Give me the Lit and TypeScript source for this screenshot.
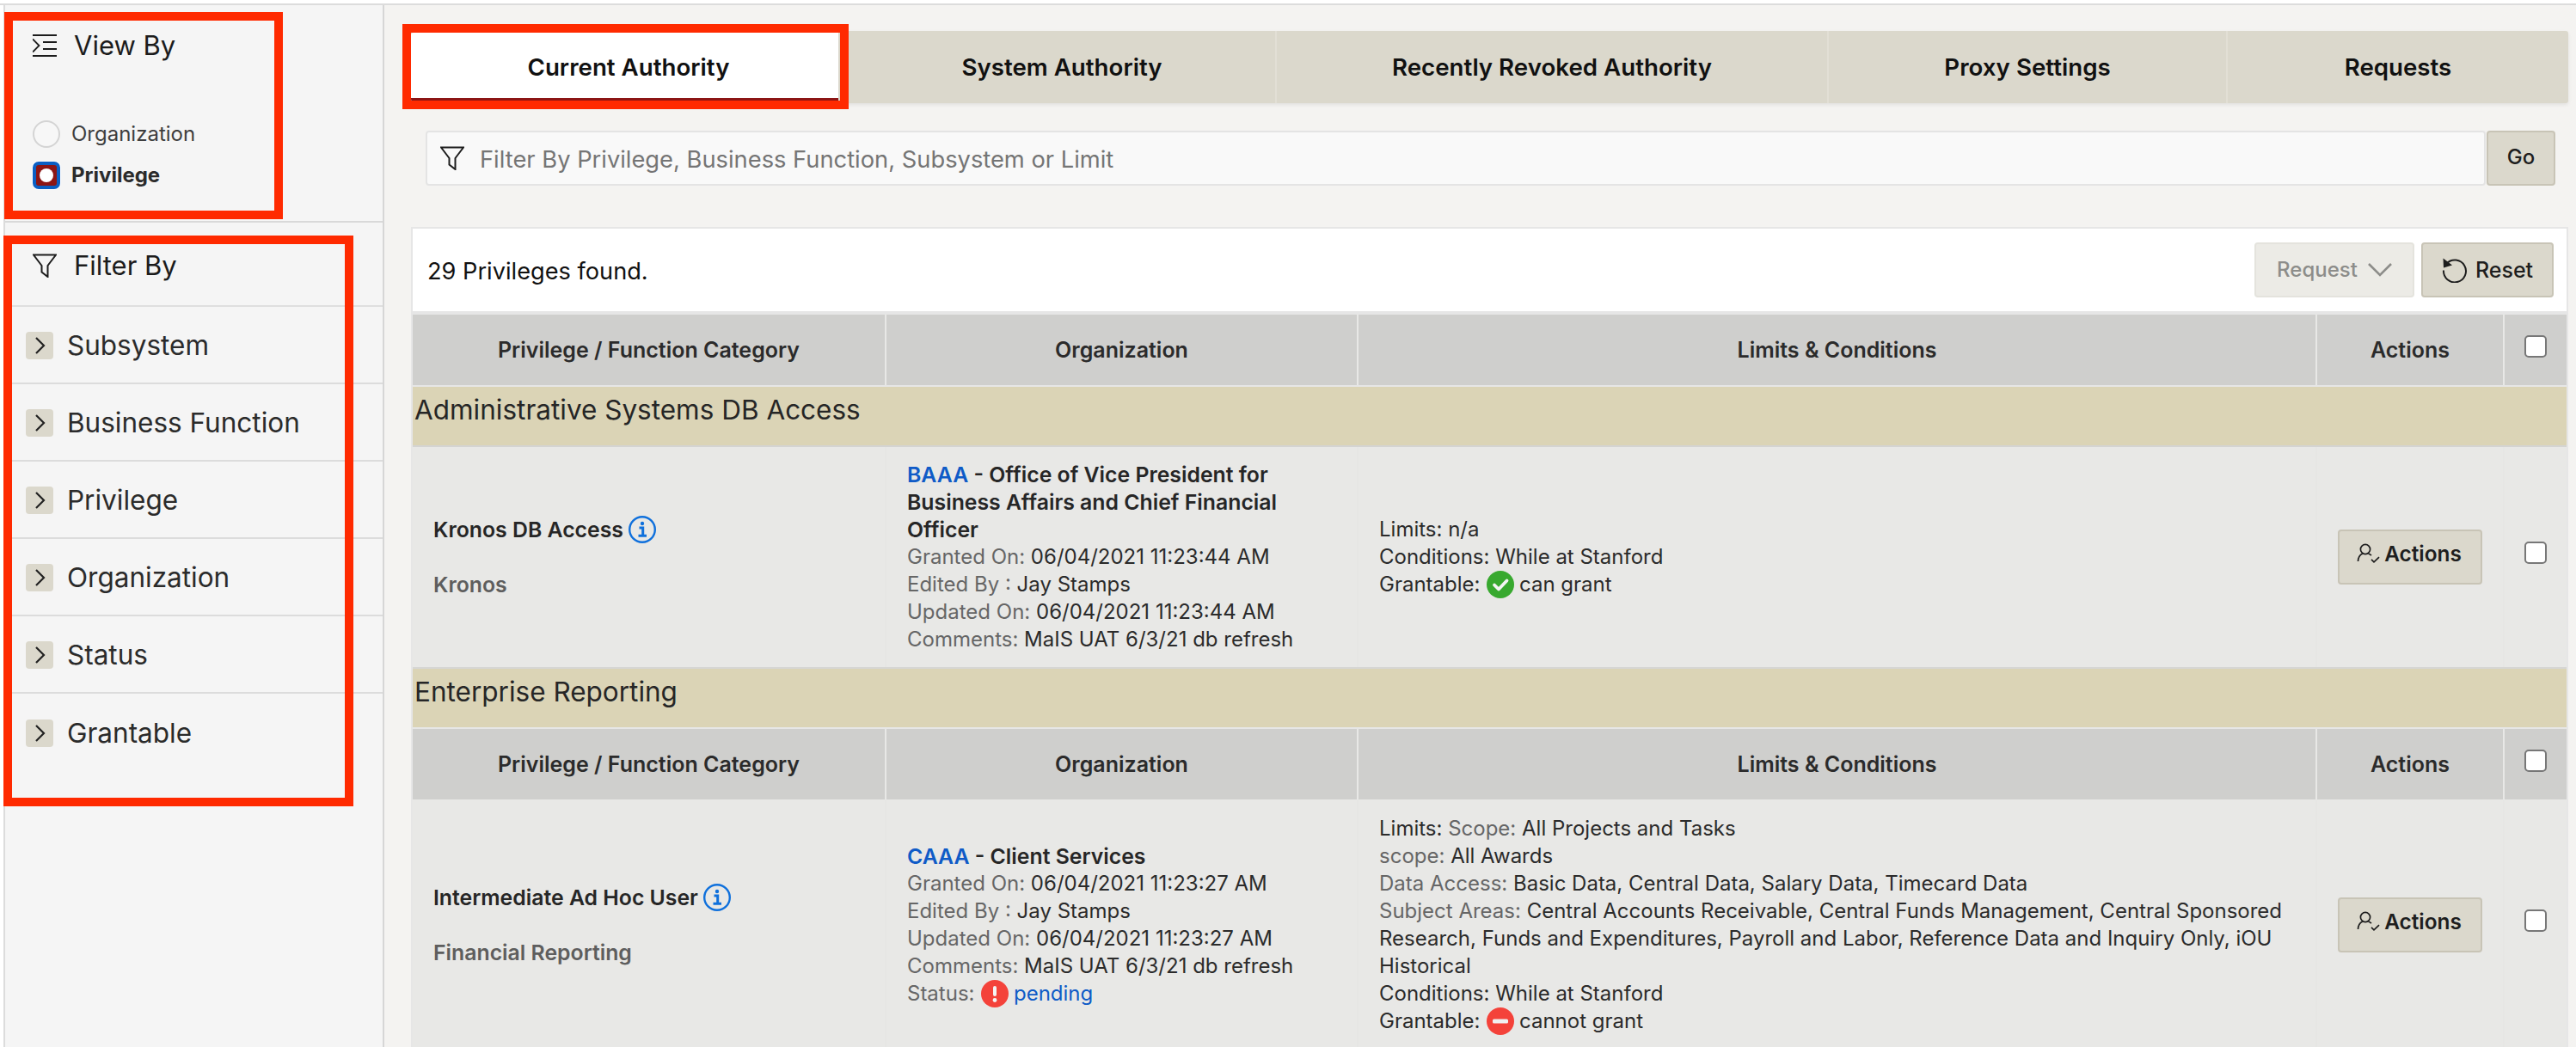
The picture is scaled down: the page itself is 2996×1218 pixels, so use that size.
import { LitElement, html, css, svg } from "lit";
import { customElement } from "lit/decorators.js";

const filterIcon = () => html`<svg viewBox="0 0 28 28" fill="none" stroke="#1c1c1c" stroke-width="2" stroke-linejoin="miter"><path d="M1 1.5h26L17.5 14v13l-7-5.5V14z"/></svg>`;
const chevron = html`<svg viewBox="0 0 32 32" fill="none" stroke="#222" stroke-width="2.2"><path d="M12 7l9 9-9 9"/></svg>`;
const infoIcon = html`<svg class="info" viewBox="0 0 32 32" fill="none"><circle cx="16" cy="16" r="14.8" stroke="#0f70dc" stroke-width="2.4"/><path d="M12.5 14h4.2v9M11.5 23.2h9.5" stroke="#0f70dc" stroke-width="3"/><circle cx="16" cy="9" r="2.2" fill="#0f70dc"/></svg>`;
const okIcon = html`<svg class="st" viewBox="0 0 32 32"><circle cx="16" cy="16" r="16" fill="#38a92f"/><path d="M9 16.5l5 5 9.5-10" fill="none" stroke="#f4f4f4" stroke-width="3.8" stroke-linecap="round" stroke-linejoin="round"/></svg>`;
const warnIcon = html`<svg class="st" viewBox="0 0 32 32"><circle cx="16" cy="16" r="16" fill="#f4423a"/><rect x="14" y="7" width="4" height="12" rx="2" fill="#f4f4f4"/><circle cx="16" cy="23.5" r="2.4" fill="#f4f4f4"/></svg>`;
const noIcon = html`<svg class="st" viewBox="0 0 32 32"><circle cx="16" cy="16" r="16" fill="#f4423a"/><rect x="7" y="13.5" width="18" height="5" rx="1.5" fill="#f0f0f0"/></svg>`;
const personIcon = html`<svg class="person" viewBox="0 0 28 24" fill="none" stroke="#1e1e1e" stroke-width="1.7"><circle cx="10" cy="7" r="5.6"/><path d="M6.8 12C3.4 13.6 1.6 17 1.5 21M13.4 12c1.5.5 2.6 1.2 3.6 2.2"/><path d="M17 18.8l3 3 6-5.6"/></svg>`;

const filters = ["Subsystem", "Business Function", "Privilege", "Organization", "Status", "Grantable"];
const tabs = ["Current Authority", "System Authority", "Recently Revoked Authority", "Proxy Settings", "Requests"];

@customElement("app-root")
export class AppRoot extends LitElement {
  static styles = css`
    :host { display: block; width: 2996px; height: 1218px; overflow: hidden; position: relative; background: #fff;
      font-family: Inter, "Noto Sans", sans-serif; font-size: 24px; line-height: 32px; color: #2b2b2b; }
    * { box-sizing: border-box; }
    .top { height: 6px; border-bottom: 2px solid #dcdcdc; }
    .shell { display: flex; height: 1212px; padding-left: 4px; }
    .side { width: 443px; flex: none; background: #f5f5f5; border-left: 2px solid #dcdcdc; border-right: 2px solid #d6d6d6; }
    .viewby { height: 253px; border-bottom: 2px solid #d9d9d9; padding: 29px 0 0 32px; }
    .head { display: flex; align-items: center; gap: 20px; font-size: 31px; color: #1c1c1c; height: 36px; }
    .head svg { width: 28px; height: 28px; flex: none; }
    .radios { margin-top: 69px; display: flex; flex-direction: column; gap: 16px; }
    .radio { display: flex; align-items: center; gap: 13px; height: 32px; color: #3e3e3e; }
    .dot { width: 32px; height: 32px; border-radius: 50%; border: 2px solid #d4d4d4; background: #f7f7f7; flex: none; }
    .dot.sel { border-radius: 7px; border: 4px solid #0a5fc4; background: #8c1515; box-shadow: 0 0 0 1px #fff; display: flex; align-items: center; justify-content: center; }
    .dot.sel::after { content: ""; width: 16px; height: 16px; border-radius: 50%; background: #fff; }
    .radio b { font-weight: 700; color: #2b2b2b; }
    .filterhead { height: 98px; padding: 32px 0 0 32px; border-bottom: 2px solid #dfdfdf; }
    .frow { height: 90px; display: flex; align-items: center; gap: 16px; padding: 2px 0 0 24px; font-size: 31.5px; color: #2b2b2b; border-bottom: 2px solid #dcdcdc; }
    .frow:last-child { border-bottom: 0; }
    .fbtn { width: 32px; height: 32px; background: #dbd8cc; border-radius: 4px; flex: none; }
    .fbtn svg { display: block; width: 32px; height: 32px; }
    .main { flex: 1; min-width: 0; background: #f4f3f1; padding: 30px 9px 0 31px; }
    .tabs { display: grid; grid-template-columns: 509px 498px 642px 464px 396px; height: 84px; background: #dbd8cc; box-shadow: 0 2px 4px rgba(0,0,0,.08); border-radius: 3px; }
    .tab { display: flex; align-items: center; justify-content: center; font-size: 27.7px; font-weight: 600; color: #111; border-right: 2px solid #e2dfd5; }
    .tab:last-child { border-right: 0; }
    .tab.on { background: #fff; border-right: 0; border-bottom: 4px solid #8c1515; margin: 2px 12px 2px 0; border-radius: 3px 0 0 3px; padding: 4px 0 0 9px; }
    .search { display: flex; height: 64px; margin: 32px 15px 0 17px; }
    .input { flex: 1; display: flex; align-items: center; gap: 18px; padding: 4px 0 0 15px; background: #f9f9f9; border: 2px solid #e4e4e4; border-radius: 4px; font-size: 27.3px; color: #757575; margin-right: 1px; }
    .input svg { width: 28px; height: 28px; flex: none; margin-top: -4px; }
    .btn { display: inline-flex; align-items: center; justify-content: center; background: #dbd8cc; border: 2px solid #c8c4b6; border-radius: 4px; font-weight: 500; color: #1e1e1e; height: 64px; }
    .go { width: 80px; padding-bottom: 2px; }
    .panel { margin-top: 48px; background: #fff; border: 2px solid #e6e6e6; border-bottom: 0; }
    .bar { height: 100px; display: flex; align-items: center; justify-content: space-between; padding: 0 15px 0 17px; font-size: 27.2px; color: #111; border-bottom: 4px solid #e6e6e6; }
    .bar > span { padding-top: 4px; }
    .bar-btns { display: flex; gap: 8px; }
    .req { width: 186px; gap: 12px; background: #ecebe6; border-color: #e4e3dd; color: #8d8d8a; font-size: 24px; }
    .req svg { width: 28px; height: 16px; }
    .reset { width: 154px; gap: 9px; font-size: 25px; }
    .reset svg { width: 30px; height: 30px; }
    .grid { display: grid; grid-template-columns: 549px 547px 1113px 216px 72px; column-gap: 2px; }
    .hd { height: 82px; background: #e8e8e6; }
    .hd > div { background: #cfcfcd; display: flex; align-items: center; justify-content: center; font-size: 25px; font-weight: 600; color: #2b2b2b; }
    .group { background: #dbd4b6; font-size: 31.5px; color: #262626; padding: 9px 0 0 2px; height: 72px; border-top: 2px solid #e6e6e6; border-bottom: 2px solid #d4d4d2; line-height: 36px; }
    .group.g2 { height: 70px; border-top: 0; border-bottom: 2px solid #e6e6e6; }
    .row { background: #e6e6e4; }
    .row.r1 { border-bottom: 2px solid #d6d6d4; }
    .row.r2 { height: 292px; }
    .row > div { background: #e8e8e6; padding: 0 24px; }
    .name { display: flex; flex-direction: column; justify-content: center; gap: 32px; font-size: 24.8px; }
    .name b { font-weight: 600; color: #262626; display: flex; align-items: center; gap: 6px; }
    .name span { font-weight: 600; color: #5e5e5e; }
    .info { width: 32px; height: 32px; flex: none; }
    .org { display: flex; flex-direction: column; justify-content: center; }
    .row > .org { padding-top: 16px; padding-bottom: 16px; }
    .org b { font-weight: 600; font-size: 24.8px; color: #262626; }
    a { color: #0f5bc7; text-decoration: none; }
    .l { color: #666; }
    .st { width: 32px; height: 32px; vertical-align: -8px; margin: 0 -1px 0 1px; }
    .lim { display: flex; flex-direction: column; justify-content: center; color: #2b2b2b; }
    .act { display: flex; align-items: center; justify-content: center; }
    .row > div.act { padding: 0; }
    .abtn { width: 168px; gap: 4px; font-weight: 600; font-size: 24.4px; color: #1e1e1e; padding: 0 2px 9px 0; }
    .person { width: 28px; height: 24px; flex: none; }
    .row > div.cb { display: flex; align-items: center; justify-content: center; padding: 0 0 10px; }
    .check { width: 26px; height: 26px; background: #fff; border: 2px solid #777; border-radius: 5px; }
    .hd .check { margin-bottom: 8px; }
    .mark { position: absolute; border: 10px solid #ff2a00; pointer-events: none; }
    .m1 { left: 5px; top: 14px; width: 324px; height: 241px; }
    .m2 { left: 4px; top: 274px; width: 407px; height: 664px; }
    .m3 { left: 468px; top: 28px; width: 519px; height: 99px; }
  `;

  private header() {
    return html`<div class="grid hd">
      <div>Privilege / Function Category</div><div>Organization</div><div>Limits &amp; Conditions</div><div>Actions</div>
      <div><span class="check"></span></div></div>`;
  }

  private actions() {
    return html`<div class="act"><span class="btn abtn">${personIcon}Actions</span></div><div class="cb"><span class="check"></span></div>`;
  }

  render() {
    return html`
      <div class="top"></div>
      <div class="shell">
        <aside class="side">
          <div class="viewby">
            <div class="head"><svg viewBox="0 0 28 28" fill="none" stroke="#1c1c1c" stroke-width="2"><path d="M0 2h28M12 10h16M12 18h16M0 26h28"/><path d="M0 6.5l7.5 7.5L0 21.5" stroke-width="1.8"/></svg>View By</div>
            <div class="radios">
              <div class="radio"><span class="dot"></span>Organization</div>
              <div class="radio"><span class="dot sel"></span><b>Privilege</b></div>
            </div>
          </div>
          <div class="filterhead"><div class="head">${filterIcon()}Filter By</div></div>
          ${filters.map((f) => html`<div class="frow"><span class="fbtn">${chevron}</span>${f}</div>`)}
        </aside>
        <main class="main">
          <div class="tabs">${tabs.map((t, i) => html`<div class="tab ${i === 0 ? "on" : ""}">${t}</div>`)}</div>
          <div class="search">
            <div class="input">${filterIcon()}Filter By Privilege, Business Function, Subsystem or Limit</div>
            <span class="btn go">Go</span>
          </div>
          <section class="panel">
            <div class="bar">
              <span>29 Privileges found.</span>
              <div class="bar-btns">
                <span class="btn req">Request<svg viewBox="0 0 28 16" fill="none" stroke="#8d8d8a" stroke-width="2.6">${svg`<path d="M1 1l13 13L27 1"/>`}</svg></span>
                <span class="btn reset"><svg viewBox="0 0 30 30" fill="none" stroke="#1e1e1e" stroke-width="2"><path d="M5.5 7.5A13 13 0 1 1 2 15.5"/><path d="M1.5 1.5l.5 11 10-3z" fill="#1e1e1e" stroke="none"/></svg>Reset</span>
              </div>
            </div>
            ${this.header()}
            <div class="group">Administrative Systems DB Access</div>
            <div class="grid row r1">
              <div class="name"><b>Kronos DB Access ${infoIcon}</b><span>Kronos</span></div>
              <div class="org">
                <b><a href="#">BAAA</a> - Office of Vice President for Business Affairs and Chief Financial Officer</b>
                <div><span class="l">Granted On:</span> 06/04/2021 11:23:44 AM</div>
                <div><span class="l">Edited By :</span> Jay Stamps</div>
                <div><span class="l">Updated On:</span> 06/04/2021 11:23:44 AM</div>
                <div><span class="l">Comments:</span> MaIS UAT 6/3/21 db refresh</div>
              </div>
              <div class="lim">
                <div>Limits: n/a</div>
                <div>Conditions: While at Stanford</div>
                <div>Grantable: ${okIcon} can grant</div>
              </div>
              ${this.actions()}
            </div>
            <div class="group g2">Enterprise Reporting</div>
            ${this.header()}
            <div class="grid row r2">
              <div class="name"><b>Intermediate Ad Hoc User ${infoIcon}</b><span>Financial Reporting</span></div>
              <div class="org">
                <b><a href="#">CAAA</a> - Client Services</b>
                <div><span class="l">Granted On:</span> 06/04/2021 11:23:27 AM</div>
                <div><span class="l">Edited By :</span> Jay Stamps</div>
                <div><span class="l">Updated On:</span> 06/04/2021 11:23:27 AM</div>
                <div><span class="l">Comments:</span> MaIS UAT 6/3/21 db refresh</div>
                <div><span class="l">Status:</span> ${warnIcon} <a href="#">pending</a></div>
              </div>
              <div class="lim">
                <div>Limits: <span class="l">Scope:</span> All Projects and Tasks</div>
                <div><span class="l">scope:</span> All Awards</div>
                <div><span class="l">Data Access:</span> Basic Data, Central Data, Salary Data, Timecard Data</div>
                <div><span class="l">Subject Areas:</span> Central Accounts Receivable, Central Funds Management, Central Sponsored Research, Funds and Expenditures, Payroll and Labor, Reference Data and Inquiry Only, iOU Historical</div>
                <div>Conditions: While at Stanford</div>
                <div>Grantable: ${noIcon} cannot grant</div>
              </div>
              ${this.actions()}
            </div>
          </section>
        </main>
      </div>
      <div class="mark m1"></div>
      <div class="mark m2"></div>
      <div class="mark m3"></div>
    `;
  }
}
